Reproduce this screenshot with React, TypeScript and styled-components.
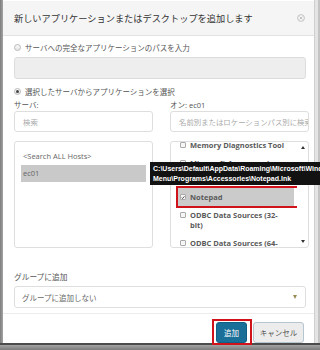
import React, { useLayoutEffect, useRef } from "react";
import styled, { createGlobalStyle } from "styled-components";

const GlobalStyle = createGlobalStyle`
  html, body {
    margin: 0;
    padding: 0;
    width: 320px;
    height: 350px;
    overflow: hidden;
  }
  body {
    font-family: "Open Sans", "Noto Sans CJK JP", sans-serif;
    color: #555;
  }
  * {
    box-sizing: border-box;
  }
`;

const Page = styled.div`
  display: grid;
  grid-template-columns: 3px 311px 1fr;
  grid-template-rows: 343px 1fr;
  width: 320px;
  height: 350px;
  background: #8f8f8f;
`;

const LeftStrip = styled.div`
  background: linear-gradient(to right, #7d7d7d, #a4a4a4);
`;

const RightStrip = styled.div`
  background: #e4e4e4;
  border-left: 1px solid #cfcfcf;
  border-right: 2px solid #c4c4c4;
`;

const BottomBar = styled.div`
  grid-column: 1 / -1;
  background: linear-gradient(to bottom, #4c4c4c 0, #4c4c4c 2px, #a3a3a3 2px, #7c7c7c 100%);
`;

const Modal = styled.div`
  display: flex;
  flex-direction: column;
  background: #fff;
  position: relative;
  padding-top: 1px;
`;

const Header = styled.div`
  display: flex;
  align-items: center;
  justify-content: space-between;
  height: 36px;
  padding: 0 9px 0 11px;
  background: #f5f5f5;
  border-bottom: 1px solid #e3e3e3;
`;

const Title = styled.div`
  font-family: "Noto Sans CJK JP", sans-serif;
  font-size: 9.2px;
  color: #333;
`;

const Body = styled.div`
  display: flex;
  flex-direction: column;
  padding: 0 8px 0 11px;
`;

const RadioRow = styled.label<{ $gap: number }>`
  display: flex;
  align-items: center;
  gap: 4px;
  height: 12px;
  margin-top: ${(p) => p.$gap}px;
  font-family: "Noto Sans CJK JP", sans-serif;
  font-size: 7.5px;
  color: #555;
`;

const Radio = styled.span<{ $checked?: boolean }>`
  display: inline-flex;
  align-items: center;
  justify-content: center;
  width: 7px;
  height: 7px;
  border-radius: 50%;
  border: 1px solid #b8b8b8;
  background: linear-gradient(#fafafa, #e6e6e6);

  &::after {
    content: "";
    width: 3px;
    height: 3px;
    border-radius: 50%;
    background: ${(p) => (p.$checked ? "#444" : "transparent")};
  }
`;

const DisabledInput = styled.div`
  height: 22px;
  margin-top: 4px;
  background: #eeeeee;
  border: 1px solid #dcdcdc;
  border-radius: 3px;
`;

const Columns = styled.div`
  display: grid;
  grid-template-columns: 139px 139px;
  column-gap: 17px;
  margin-top: 2px;
`;

const Column = styled.div`
  display: flex;
  flex-direction: column;
  position: relative;
`;

const FieldLabel = styled.div`
  height: 12px;
  line-height: 12px;
  font-family: "Open Sans", "Noto Sans CJK JP", sans-serif;
  font-size: 7.5px;
  color: #555;
`;

const SearchBox = styled.div`
  height: 21px;
  display: flex;
  align-items: center;
  padding-left: 8px;
  border: 1px solid #dedede;
  border-radius: 3px;
  font-family: "Noto Sans CJK JP", sans-serif;
  font-size: 7.4px;
  color: #aaa;
  white-space: nowrap;
  overflow: hidden;
`;

const HostList = styled.div`
  height: 107px;
  margin-top: 9px;
  padding: 6px 6px 0 6px;
  border: 1px solid #dedede;
  border-radius: 3px;
`;

const HostItem = styled.div<{ $selected?: boolean }>`
  height: 17px;
  line-height: 17px;
  padding-left: 2px;
  font-size: 7.5px;
  color: #666;
  background: ${(p) => (p.$selected ? "#c9c9c9" : "transparent")};
`;

const AppList = styled.div`
  height: 107px;
  margin-top: 9px;
  display: flex;
  border: 1px solid #dedede;
  border-radius: 3px;
`;

const AppScroll = styled.div`
  flex: 1;
  overflow: hidden;
  padding: 0 3px 0 7px;
`;

const AppRow = styled.div<{ $selected?: boolean; $minHeight?: number }>`
  display: flex;
  align-items: flex-start;
  gap: 4px;
  padding: 4px 2px;
  min-height: ${(p) => p.$minHeight ?? 18}px;
  line-height: 10px;
  font-size: 7.5px;
  font-weight: 700;
  color: #5a5a5a;
  background: ${(p) => (p.$selected ? "#cbcbcb" : "transparent")};
  position: relative;
`;

const Highlight = styled.span<{ $inset: string }>`
  position: absolute;
  inset: ${(p) => p.$inset};
  border: 2px solid #d0121b;
  pointer-events: none;
`;

const CheckBox = styled.span`
  flex: none;
  display: inline-flex;
  align-items: center;
  justify-content: center;
  width: 6px;
  height: 6px;
  margin-top: 2px;
  border: 1px solid #aaa;
  border-radius: 1px;
  background: #f6f6f6;
`;

const ScrollCol = styled.div`
  width: 11px;
  display: flex;
  flex-direction: column;
  justify-content: space-between;
  align-items: center;
  padding: 4px 0;
`;

const Arrow = styled.span<{ $down?: boolean }>`
  width: 0;
  height: 0;
  border-left: 2px solid transparent;
  border-right: 2px solid transparent;
  ${(p) =>
    p.$down ? "border-top: 3px solid #333;" : "border-bottom: 3px solid #333;"}
`;

const Tooltip = styled.div`
  position: absolute;
  left: -20px;
  top: 63px;
  width: 185px;
  height: 23px;
  padding: 2px 3px;
  background: #121212;
  color: #fff;
  font-family: "Liberation Sans", Arial, sans-serif;
  font-weight: 700;
  font-size: 7px;
  line-height: 9.5px;
  white-space: nowrap;
  overflow: hidden;
  z-index: 5;
`;

const GroupLabel = styled.div`
  height: 12px;
  line-height: 12px;
  margin-top: 23px;
  font-family: "Noto Sans CJK JP", sans-serif;
  font-size: 7.7px;
  color: #555;
`;

const Select = styled.div`
  height: 22px;
  margin-top: 3px;
  display: flex;
  align-items: center;
  justify-content: space-between;
  padding: 0 8px 0 7px;
  border: 1px solid #dedede;
  border-radius: 3px;
  font-family: "Noto Sans CJK JP", sans-serif;
  font-size: 7.5px;
  color: #666;
`;

const Caret = styled.span`
  width: 0;
  height: 0;
  border-left: 2.5px solid transparent;
  border-right: 2.5px solid transparent;
  border-top: 4px solid #9a8c52;
`;

const Footer = styled.div`
  display: flex;
  justify-content: flex-end;
  gap: 6px;
  margin-top: 5px;
  padding: 8px 10px 0 0;
  border-top: 1px solid #ececec;
`;

const Button = styled.button<{ $primary?: boolean }>`
  position: relative;
  height: 21px;
  padding: 0;
  width: ${(p) => (p.$primary ? 31 : 51)}px;
  border-radius: 3px;
  border: 1px solid ${(p) => (p.$primary ? "#125f86" : "#b5c6d0")};
  background: ${(p) => (p.$primary ? "#1a6f99" : "#ececec")};
  color: ${(p) => (p.$primary ? "#fff" : "#555")};
  font-family: "Noto Sans CJK JP", sans-serif;
  font-size: 7.5px;
`;

function CloseIcon() {
  return (
    <svg width="8" height="8" viewBox="0 0 8 8">
      <circle cx="4" cy="4" r="3.4" fill="none" stroke="#bdbdbd" strokeWidth="0.9" />
      <path d="M2.6 2.6 L5.4 5.4 M5.4 2.6 L2.6 5.4" stroke="#bdbdbd" strokeWidth="0.9" />
    </svg>
  );
}

function Check() {
  return (
    <svg width="5" height="5" viewBox="0 0 5 5">
      <path d="M0.8 2.6 L2 3.8 L4.3 1" fill="none" stroke="#333" strokeWidth="1" />
    </svg>
  );
}

const apps = [
  { label: <>Memory Diagnostics Tool</> },
  {
    label: (
      <>
        Microsoft Azure services
        <br />
        RemoteApp
      </>
    ),
    minHeight: 34,
  },
  { label: <>Notepad</>, selected: true },
  {
    label: (
      <>
        ODBC Data Sources (32-
        <br />
        bit)
      </>
    ),
  },
  {
    label: (
      <>
        ODBC Data Sources (64-
        <br />
        bit)
      </>
    ),
  },
];

export default function App() {
  const scrollRef = useRef<HTMLDivElement>(null);

  useLayoutEffect(() => {
    if (scrollRef.current) scrollRef.current.scrollTop = 6;
  }, []);

  return (
    <>
      <GlobalStyle />
      <Page>
        <LeftStrip />
        <Modal>
          <Header>
            <Title>新しいアプリケーションまたはデスクトップを追加します</Title>
            <CloseIcon />
          </Header>
          <Body>
            <RadioRow $gap={5}>
              <Radio />
              サーバへの完全なアプリケーションのパスを入力
            </RadioRow>
            <DisabledInput />
            <RadioRow $gap={6}>
              <Radio $checked />
              選択したサーバからアプリケーションを選択
            </RadioRow>
            <Columns>
              <Column>
                <FieldLabel>サーバ:</FieldLabel>
                <SearchBox>検索</SearchBox>
                <HostList>
                  <HostItem>&lt;Search ALL Hosts&gt;</HostItem>
                  <HostItem $selected>ec01</HostItem>
                </HostList>
              </Column>
              <Column>
                <FieldLabel>オン: ec01</FieldLabel>
                <SearchBox>名前別またはロケーションパス別に検索</SearchBox>
                <AppList>
                  <AppScroll ref={scrollRef}>
                    {apps.map((app, i) => (
                      <AppRow key={i} $selected={app.selected} $minHeight={app.minHeight}>
                        <CheckBox>{app.selected && <Check />}</CheckBox>
                        <span>{app.label}</span>
                        {app.selected && <Highlight $inset="-2px -7px -2px -2px" />}
                      </AppRow>
                    ))}
                  </AppScroll>
                  <ScrollCol>
                    <Arrow />
                    <Arrow $down />
                  </ScrollCol>
                </AppList>
                <Tooltip>
                  C:\Users\Default\AppData\Roaming\Microsoft\Windows\Start
                  <br />
                  Menu\Programs\Accessories\Notepad.lnk
                </Tooltip>
              </Column>
            </Columns>
            <GroupLabel>グループに追加</GroupLabel>
            <Select>
              グループに追加しない
              <Caret />
            </Select>
          </Body>
          <Footer>
            <Button $primary>
              追加
              <Highlight $inset="-4px -6px -3px -5px" />
            </Button>
            <Button>キャンセル</Button>
          </Footer>
        </Modal>
        <RightStrip />
        <BottomBar />
      </Page>
    </>
  );
}
